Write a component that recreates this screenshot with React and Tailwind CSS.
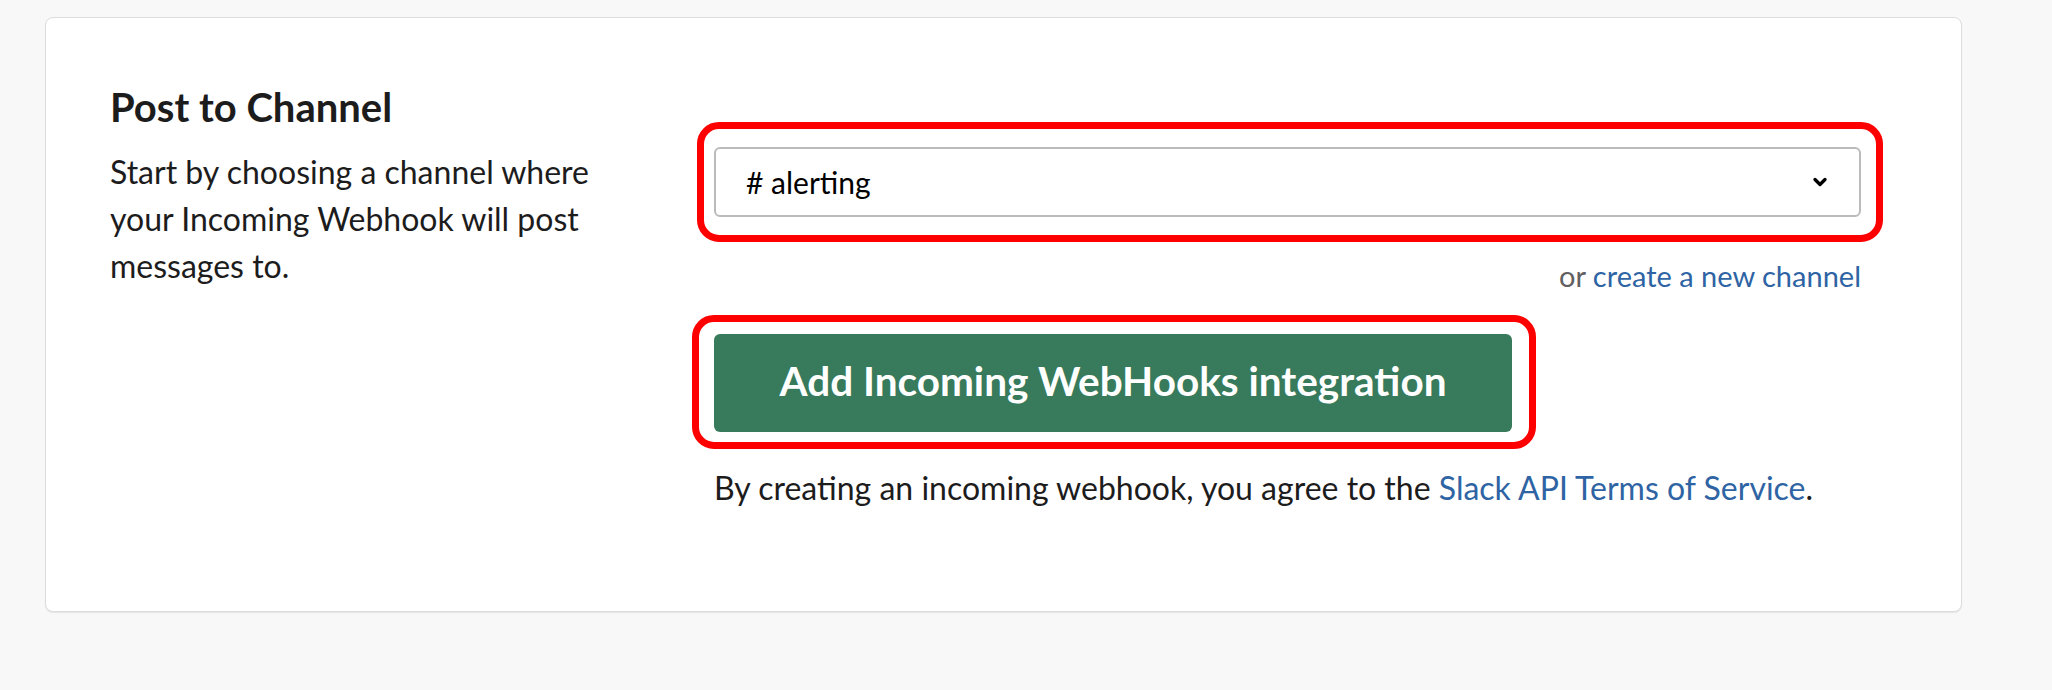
import { ChevronDown } from 'lucide-react';

const font = { fontFamily: 'Lato, "Open Sans", sans-serif' };

export default function App() {
  return (
    <div className="min-h-[690px] w-[2052px] bg-[#f8f8f8] pl-[45px] pt-[17px]" style={font}>
      {/* Card */}
      <div className="w-[1917px] h-[595px] bg-white rounded-lg border border-[#dddddd] shadow-[0_1px_1px_rgba(0,0,0,0.08)] pl-[64px] pr-[100px] pt-[65px] flex">
        {/* Left column */}
        <div className="w-[540px] shrink-0">
          <h2 className="text-[40px] font-bold leading-[1.2] text-[#1d1c1d]">Post to Channel</h2>
          <p className="mt-[17px] text-[32px] leading-[47px] text-[#1d1c1d] w-[505px]">
            Start by choosing a channel where your Incoming Webhook will post messages to.
          </p>
        </div>

        {/* Right column */}
        <div className="flex-1 pl-[64px] pt-[64px] flex flex-col">
          {/* Select with annotation */}
          <div className="relative">
            <div className="absolute left-[-17px] right-[-22px] top-[-25px] bottom-[-25px] border-[7px] border-[#ff0000] rounded-[22px] pointer-events-none" />
            <div className="h-[70px] rounded-md border-2 border-[#bbbbbb] bg-white flex items-center justify-between pl-[30px] pr-[29px]">
              <span className="text-[30px] text-black"># alerting</span>
              <ChevronDown size={20} strokeWidth={4} className="text-black" />
            </div>
          </div>

          <div className="mt-[42px] text-right text-[29px] leading-[1.2]">
            <span className="text-[#616061]">or </span>
            <a className="text-[#2f64a4]">create a new channel</a>
          </div>

          {/* Button with annotation */}
          <div className="relative mt-[40px] w-[798px]">
            <div className="absolute left-[-22px] right-[-24px] top-[-19px] bottom-[-17px] border-[7px] border-[#ff0000] rounded-[22px] pointer-events-none" />
            <button className="w-full h-[98px] rounded-md bg-[#377a5c] text-white text-[40.5px] font-bold pb-[3px]">
              Add Incoming WebHooks integration
            </button>
          </div>

          <p className="mt-[37px] text-[32px] leading-[1.2] text-[#1d1c1d]">
            By creating an incoming webhook, you agree to the{' '}
            <a className="text-[#2f64a4]">Slack API Terms of Service</a>.
          </p>
        </div>
      </div>
    </div>
  );
}
